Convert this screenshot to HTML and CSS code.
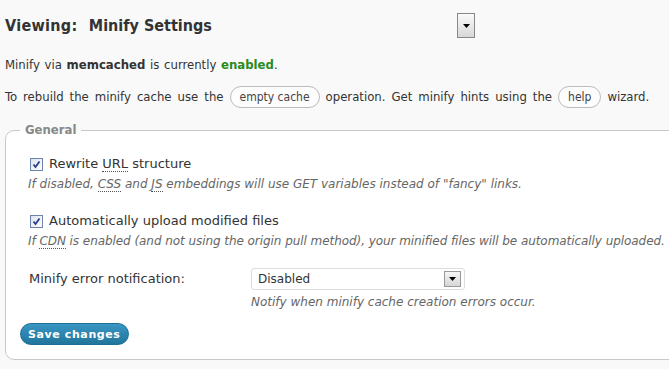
FILE: index.html
```html
<!DOCTYPE html>
<html lang="en">
<head>
    <meta charset="UTF-8">
    <title>Minify Settings</title>
    <link rel="stylesheet" href="styles.css">
</head>
<body>

    <div class="viewing">
        <h2>Viewing: <span class="page-name">Minify Settings</span></h2>
        <span class="mini-select"><svg width="7" height="4" viewBox="0 0 7 4"><path d="M0 0h7L3.5 4z" fill="#000"/></svg></span>
    </div>

    <p class="status first">Minify via <strong>memcached</strong> is currently <span class="enabled">enabled</span>.</p>

    <p class="status hints">To rebuild the minify cache use the <span class="pill">empty cache</span> operation. Get minify hints using the <span class="pill">help</span> wizard.</p>

    <fieldset class="general">
        <legend>General</legend>

        <div class="option">
            <label><span class="check"><svg width="9" height="9" viewBox="0 0 9 9"><path d="M1.5 4.5l2 2.5L7.5 1.5" fill="none" stroke="#2a3f86" stroke-width="1.8"/></svg></span><span>Rewrite <abbr>URL</abbr> structure</span></label>
            <p class="desc">If disabled, <abbr>CSS</abbr> and <abbr>JS</abbr> embeddings will use GET variables instead of "fancy" links.</p>
        </div>

        <div class="option">
            <label><span class="check"><svg width="9" height="9" viewBox="0 0 9 9"><path d="M1.5 4.5l2 2.5L7.5 1.5" fill="none" stroke="#2a3f86" stroke-width="1.8"/></svg></span><span>Automatically upload modified files</span></label>
            <p class="desc tight">If <abbr>CDN</abbr> is enabled (and not using the origin pull method), your minified files will be automatically uploaded.</p>
        </div>

        <div class="field-row">
            <span class="field-label">Minify error notification:</span>
            <div class="field-input">
                <span class="select-box">Disabled<span class="arrow-btn"><svg width="7" height="4" viewBox="0 0 7 4"><path d="M0 0h7L3.5 4z" fill="#000"/></svg></span></span>
                <p class="desc">Notify when minify cache creation errors occur.</p>
            </div>
        </div>

        <button class="save">Save changes</button>
    </fieldset>

</body>
</html>
```

FILE: styles.css
```css
body {
    margin: 0;
    padding: 0 0 0 5px;
    background: #f9f9f9;
    color: #333;
    font-family: "DejaVu Sans Condensed", "DejaVu Sans", sans-serif;
    font-size: 13px;
    overflow: hidden;
}

.viewing {
    display: flex;
    align-items: center;
    height: 51px;
}

.viewing h2 {
    margin: 0;
    width: 452px;
    font-size: 16px;
    font-weight: bold;
    color: #333;
    word-spacing: 6px;
    letter-spacing: 0.3px;
}

.page-name {
    word-spacing: 0;
    letter-spacing: 0;
}

.mini-select {
    display: flex;
    align-items: center;
    justify-content: center;
    width: 16px;
    height: 23px;
    border: 1px solid #888;
    background: linear-gradient(#fafafa, #d8d8d8);
}

.status {
    margin: 0 0 14px;
    line-height: 18px;
    word-spacing: 1px;
    white-space: nowrap;
}

.status.first {
    margin-top: 5px;
}

.status.hints {
    word-spacing: 2.3px;
}

.enabled {
    color: #2b8a1c;
    font-weight: bold;
}

.pill {
    display: inline-block;
    margin: -2px 0;
    padding: 0 9px;
    line-height: 20px;
    border: 1px solid #bbb;
    border-radius: 11px;
    background: #fdfdfd;
    font-size: 12px;
    color: #444;
    word-spacing: 0;
}

.general {
    margin: 16px -10px 0 0;
    padding: 16px 14px 14px 22px;
    border: 1px solid #c8c8c8;
    border-radius: 9px;
    background: #fff;
    font-family: "DejaVu Sans", sans-serif;
    font-size: 13px;
}

.general legend {
    padding: 0 5px;
    margin-left: -8px;
    line-height: 16px;
    color: #888;
    font-weight: bold;
    font-family: "DejaVu Sans Condensed", "DejaVu Sans", sans-serif;
    font-size: 13px;
}

.option {
    margin-bottom: 19px;
}

.option label {
    display: flex;
    align-items: center;
    gap: 6px;
    padding-left: 2px;
    line-height: 20px;
}

.check {
    display: flex;
    align-items: center;
    justify-content: center;
    width: 11px;
    height: 11px;
    border: 1px solid #6d82ad;
    background: linear-gradient(135deg, #dde3ef, #fff);
}

abbr {
    text-decoration: none;
    border-bottom: 1px dotted #555;
}

.desc {
    margin: 2px 0 0;
    color: #666;
    font-style: italic;
    font-size: 12px;
    line-height: 16px;
    white-space: nowrap;
}

.desc.tight {
    letter-spacing: -0.06px;
}

.field-row {
    display: flex;
}

.field-label {
    width: 222px;
    line-height: 22px;
    padding-left: 1px;
}

.select-box {
    display: flex;
    align-items: center;
    justify-content: space-between;
    width: 203px;
    height: 20px;
    padding: 0 3px 0 6px;
    border: 1px solid #ddd;
    border-radius: 3px;
    background: #fff;
    font-size: 12px;
}

.arrow-btn {
    display: flex;
    align-items: center;
    justify-content: center;
    width: 15px;
    height: 14px;
    border: 1px solid #999;
    background: linear-gradient(#f6f6f6, #d6d6d6);
}

.field-input .desc {
    margin-top: 4px;
}

.save {
    margin: 13px 0 0 -8px;
    padding: 0 7px;
    height: 22px;
    border: 1px solid #1e6f96;
    border-radius: 11px;
    background: linear-gradient(#3a96c3, #21759b);
    color: #fff;
    font-family: "DejaVu Sans", sans-serif;
    font-weight: bold;
    font-size: 11px;
    letter-spacing: 0.6px;
}
```
